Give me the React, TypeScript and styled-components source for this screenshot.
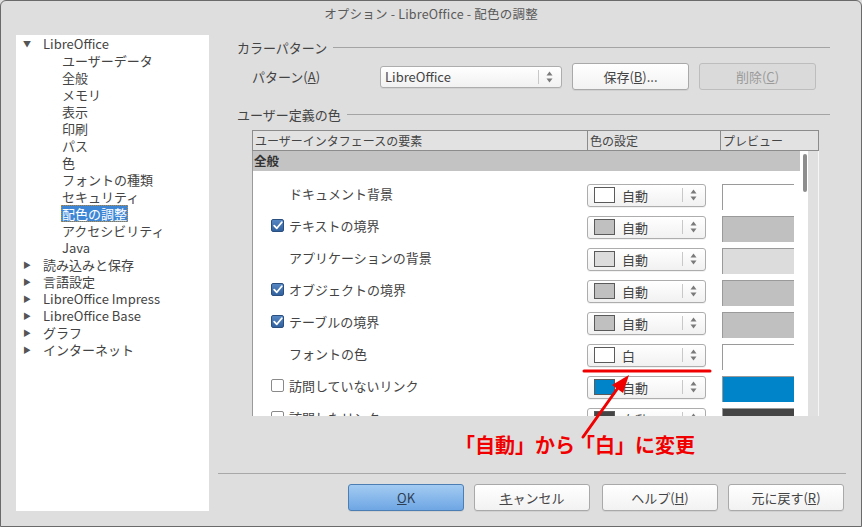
import React from "react";
import styled, { createGlobalStyle, css } from "styled-components";

const Global = createGlobalStyle`
  html, body { margin: 0; padding: 0; background: #dedede; }
  body { font-family: "Noto Sans CJK JP", "Noto Sans", sans-serif; color: #444; }
  * { box-sizing: border-box; }
`;

const Window = styled.div`
  position: relative;
  width: 862px;
  height: 527px;
  background: #dedede;
  border: 1px solid #6a6a6a;
  border-radius: 6px 6px 0 0;
  overflow: hidden;
  display: flex;
  flex-direction: column;
`;

const TitleBar = styled.div`
  height: 34px;
  flex: none;
  display: flex;
  justify-content: center;
  padding-top: 5px;
  font-size: 12.5px;
  letter-spacing: 0.2px;
  color: #5a5a5a;
  line-height: 16px;
`;

const Content = styled.div`
  display: flex;
  align-items: flex-start;
  padding-left: 15px;
`;

const Tree = styled.div`
  width: 193px;
  height: 476px;
  background: #fff;
  flex: none;
`;

const TreeItem = styled.div<{ $level: number }>`
  height: 17px;
  display: flex;
  align-items: center;
  font-size: 13px;
  line-height: 17px;
  color: #444;
  padding-left: ${(p) => (p.$level === 0 ? 7 : 45)}px;
  white-space: nowrap;
`;

const Arrow = styled.span`
  width: 19px;
  font-size: 8px;
  color: #555;
  display: inline-block;
`;

const ItemText = styled.span<{ $selected?: boolean }>`
  padding: 0 1px;
  ${(p) =>
    p.$selected &&
    css`
      background: #3d86d6;
      color: #fff;
      outline: 1px dotted #c88a2a;
      outline-offset: -1px;
    `}
`;

const Right = styled.div`
  margin-left: 9px;
  width: 628px;
  display: flex;
  flex-direction: column;
`;

const SectionHeader = styled.div<{ $mt: number }>`
  margin-top: ${(p) => p.$mt}px;
  height: 17px;
  display: flex;
  align-items: center;
  gap: 6px;
  padding-left: 19px;
  padding-right: 16px;
  font-size: 13px;
  color: #444;
  white-space: nowrap;
`;

const Rule = styled.div`
  flex: 1;
  height: 1px;
  background: #a4a4a4;
`;

const PatternRow = styled.div`
  margin-top: 7px;
  height: 27px;
  display: flex;
  align-items: center;
  padding-left: 34px;
`;

const PatternLabel = styled.div`
  width: 128px;
  font-size: 13px;
  color: #444;
`;

const Combo = styled.div<{ $w: number; $h: number }>`
  width: ${(p) => p.$w}px;
  height: ${(p) => p.$h}px;
  display: flex;
  align-items: center;
  background: linear-gradient(#ffffff, #f1f1f1);
  border: 1px solid #adadad;
  border-radius: 3px;
  box-shadow: 0 1px 0 rgba(0, 0, 0, 0.05);
  font-size: 13px;
  color: #444;
  padding-left: 4px;
  flex: none;
`;

const ComboText = styled.span`
  flex: 1;
  white-space: nowrap;
`;

const SpinWrap = styled.div`
  width: 21px;
  height: 14px;
  display: flex;
  align-items: center;
  border-left: 1px solid #c8c8c8;
  justify-content: center;
  margin-right: 2px;
`;

const Spinner = () => (
  <SpinWrap>
    <svg width="7" height="12" viewBox="0 0 7 12">
      <path d="M3.5 0.5 L6.5 4.5 L0.5 4.5 Z" fill="#7a7a7a" />
      <path d="M0.5 7.5 L6.5 7.5 L3.5 11.5 Z" fill="#7a7a7a" />
    </svg>
  </SpinWrap>
);

const Button = styled.button<{ $primary?: boolean; $disabled?: boolean; $ml?: number; $w?: number }>`
  width: ${(p) => p.$w ?? 117}px;
  height: 27px;
  margin-left: ${(p) => p.$ml ?? 0}px;
  font-family: inherit;
  font-size: 13px;
  border-radius: 3px;
  padding: 0;
  color: #444;
  border: 1px solid #a9a9a9;
  background: linear-gradient(#ffffff, #f2f2f2);
  box-shadow: 0 1px 0 rgba(0, 0, 0, 0.06);
  flex: none;
  ${(p) =>
    p.$primary &&
    css`
      background: linear-gradient(#a3cbf2, #6ea6e4);
      border-color: #4c7eb4;
      color: #2e3f55;
    `}
  ${(p) =>
    p.$disabled &&
    css`
      background: #dadada;
      border-color: #bdbdbd;
      color: #9a9a9a;
      box-shadow: none;
    `}
`;

const Table = styled.div`
  margin-top: 7px;
  margin-left: 34px;
  width: 567px;
  height: 286px;
  display: flex;
  flex-direction: column;
`;

const HeaderRow = styled.div`
  height: 21px;
  display: grid;
  grid-template-columns: 334px 133px 100px;
  border: 1px solid #8c8c8c;
  background: #e2e2e2;
  font-size: 12px;
  color: #444;
`;

const HeaderCell = styled.div<{ $first?: boolean }>`
  padding-left: 2px;
  line-height: 19px;
  white-space: nowrap;
  overflow: hidden;
  border-left: ${(p) => (p.$first ? "none" : "1px solid #8c8c8c")};
`;

const Body = styled.div`
  flex: 1;
  display: flex;
  overflow: hidden;
`;

const BodyMain = styled.div`
  width: 556px;
  background: #fff;
  border-left: 1px solid #9a9a9a;
  display: flex;
  overflow: hidden;
`;

const Rows = styled.div`
  width: 547px;
  display: flex;
  flex-direction: column;
`;

const ScrollTrack = styled.div`
  width: 9px;
  background: #fff;
`;

const Thumb = styled.div`
  margin-top: 3px;
  margin-left: 3px;
  width: 4px;
  height: 38px;
  border-radius: 2px;
  background: #8d8d8d;
`;

const Gutter = styled.div`
  width: 11px;
  background: #e0e0e0;
  border-right: 1px solid #f6f6f6;
`;

const GroupRow = styled.div`
  height: 20px;
  background: #c3c3c3;
  font-size: 12.5px;
  font-weight: 700;
  color: #333;
  padding-left: 1px;
  line-height: 19px;
  margin-bottom: 8px;
  flex: none;
`;

const Row = styled.div`
  height: 32px;
  flex: none;
  display: grid;
  grid-template-columns: 334px 134px 79px;
  align-items: center;
`;

const LabelCell = styled.div`
  display: flex;
  align-items: center;
  gap: 5px;
  padding-left: 18px;
  font-size: 13px;
  color: #444;
  white-space: nowrap;
  margin-top: -4px;
`;

const Check = styled.span<{ $checked?: boolean; $hidden?: boolean }>`
  width: 13px;
  height: 13px;
  flex: none;
  border-radius: 2px;
  display: inline-flex;
  align-items: center;
  justify-content: center;
  visibility: ${(p) => (p.$hidden ? "hidden" : "visible")};
  ${(p) =>
    p.$checked
      ? css`
          background: linear-gradient(#5687c2, #31629f);
          border: 1px solid #2b4f7f;
        `
      : css`
          background: #fff;
          border: 1px solid #8a8a8a;
        `}
`;

const ColorCell = styled.div``;

const Swatch = styled.span<{ $color: string }>`
  width: 21px;
  height: 16px;
  border: 1px solid #5a5a5a;
  background: ${(p) => p.$color};
  margin-left: 2px;
  margin-right: 7px;
  flex: none;
`;

const Preview = styled.div<{ $color: string }>`
  width: 72px;
  height: 26px;
  align-self: start;
  margin-top: 5px;
  margin-left: 1px;
  background: ${(p) => p.$color};
  border-left: 1px solid #9a9a9a;
  border-top: 1px solid #9a9a9a;
`;

const Separator = styled.div`
  margin-top: 57px;
  height: 1px;
  width: 628px;
  background: #a8a8a8;
`;

const ButtonRow = styled.div`
  margin-top: 10px;
  display: flex;
  justify-content: flex-end;
  padding-right: 2px;
`;

const Overlay = styled.svg`
  position: absolute;
  left: 0;
  top: 0;
  pointer-events: none;
`;

const Note = styled.div`
  position: absolute;
  left: 454px;
  top: 429px;
  font-size: 20px;
  font-weight: 700;
  color: #f00000;
  white-space: nowrap;
`;

const treeItems: { t: string; level: number; arrow?: "down" | "right"; sel?: boolean }[] = [
  { t: "LibreOffice", level: 0, arrow: "down" },
  { t: "ユーザーデータ", level: 1 },
  { t: "全般", level: 1 },
  { t: "メモリ", level: 1 },
  { t: "表示", level: 1 },
  { t: "印刷", level: 1 },
  { t: "パス", level: 1 },
  { t: "色", level: 1 },
  { t: "フォントの種類", level: 1 },
  { t: "セキュリティ", level: 1 },
  { t: "配色の調整", level: 1, sel: true },
  { t: "アクセシビリティ", level: 1 },
  { t: "Java", level: 1 },
  { t: "読み込みと保存", level: 0, arrow: "right" },
  { t: "言語設定", level: 0, arrow: "right" },
  { t: "LibreOffice Impress", level: 0, arrow: "right" },
  { t: "LibreOffice Base", level: 0, arrow: "right" },
  { t: "グラフ", level: 0, arrow: "right" },
  { t: "インターネット", level: 0, arrow: "right" },
];

const rows: { label: string; check?: boolean | null; value: string; sw: string; pv: string }[] = [
  { label: "ドキュメント背景", check: null, value: "自動", sw: "#ffffff", pv: "#ffffff" },
  { label: "テキストの境界", check: true, value: "自動", sw: "#c0c0c0", pv: "#c0c0c0" },
  { label: "アプリケーションの背景", check: null, value: "自動", sw: "#dcdcdc", pv: "#dcdcdc" },
  { label: "オブジェクトの境界", check: true, value: "自動", sw: "#c0c0c0", pv: "#c0c0c0" },
  { label: "テーブルの境界", check: true, value: "自動", sw: "#c0c0c0", pv: "#c0c0c0" },
  { label: "フォントの色", check: null, value: "白", sw: "#ffffff", pv: "#ffffff" },
  { label: "訪問していないリンク", check: false, value: "自動", sw: "#0084c9", pv: "#0084c9" },
  { label: "訪問したリンク", check: false, value: "自動", sw: "#454545", pv: "#454545" },
];

const CheckMark = () => (
  <svg width="10" height="9" viewBox="0 0 10 9">
    <path d="M1.2 4.6 L3.8 7.3 L8.8 1.2" stroke="#fff" strokeWidth="1.8" fill="none" strokeLinecap="round" strokeLinejoin="round" />
  </svg>
);

export default function App() {
  return (
    <>
      <Global />
      <Window>
        <TitleBar>オプション - LibreOffice - 配色の調整</TitleBar>
        <Content>
          <Tree>
            {treeItems.map((it, i) => (
              <TreeItem key={i} $level={it.level}>
                {it.level === 0 && <Arrow>{it.arrow === "down" ? "▼" : "▶"}</Arrow>}
                <ItemText $selected={it.sel}>{it.t}</ItemText>
              </TreeItem>
            ))}
          </Tree>
          <Right>
            <SectionHeader $mt={4}>
              カラーパターン
              <Rule />
            </SectionHeader>
            <PatternRow>
              <PatternLabel>
                パターン(<u>A</u>)
              </PatternLabel>
              <Combo $w={182} $h={22}>
                <ComboText>LibreOffice</ComboText>
                <Spinner />
              </Combo>
              <Button $ml={10}>
                保存(<u>B</u>)...
              </Button>
              <Button $ml={10} $disabled>
                削除(<u>C</u>)
              </Button>
            </PatternRow>
            <SectionHeader $mt={16}>
              ユーザー定義の色
              <Rule />
            </SectionHeader>
            <Table>
              <HeaderRow>
                <HeaderCell $first>ユーザーインタフェースの要素</HeaderCell>
                <HeaderCell>色の設定</HeaderCell>
                <HeaderCell>プレビュー</HeaderCell>
              </HeaderRow>
              <Body>
                <BodyMain>
                  <Rows>
                    <GroupRow>全般</GroupRow>
                    {rows.map((r, i) => (
                      <Row key={i}>
                        <LabelCell>
                          <Check $checked={r.check === true} $hidden={r.check === null}>
                            {r.check === true && <CheckMark />}
                          </Check>
                          {r.label}
                        </LabelCell>
                        <ColorCell>
                          <Combo $w={119} $h={23}>
                            <Swatch $color={r.sw} />
                            <ComboText>{r.value}</ComboText>
                            <Spinner />
                          </Combo>
                        </ColorCell>
                        <Preview $color={r.pv} />
                      </Row>
                    ))}
                  </Rows>
                  <ScrollTrack>
                    <Thumb />
                  </ScrollTrack>
                </BodyMain>
                <Gutter />
              </Body>
            </Table>
            <Separator />
            <ButtonRow>
              <Button $primary $w={116}>
                <u>O</u>K
              </Button>
              <Button $w={116} $ml={10}>
                <u>キ</u>ャンセル
              </Button>
              <Button $w={116} $ml={12}>
                ヘルプ(<u>H</u>)
              </Button>
              <Button $w={116} $ml={10}>
                元に戻す(<u>R</u>)
              </Button>
            </ButtonRow>
          </Right>
        </Content>
        <Overlay width="862" height="527" viewBox="0 0 862 527">
          <line x1="583" y1="370" x2="709" y2="370" stroke="#f00000" strokeWidth="3" strokeLinecap="round" />
          <line x1="582" y1="436" x2="619" y2="384" stroke="#f00000" strokeWidth="3" strokeLinecap="round" />
          <path d="M628 374 L622 392 L611 384 Z" fill="#f00000" />
        </Overlay>
        <Note>「自動」から「白」に変更</Note>
      </Window>
    </>
  );
}
